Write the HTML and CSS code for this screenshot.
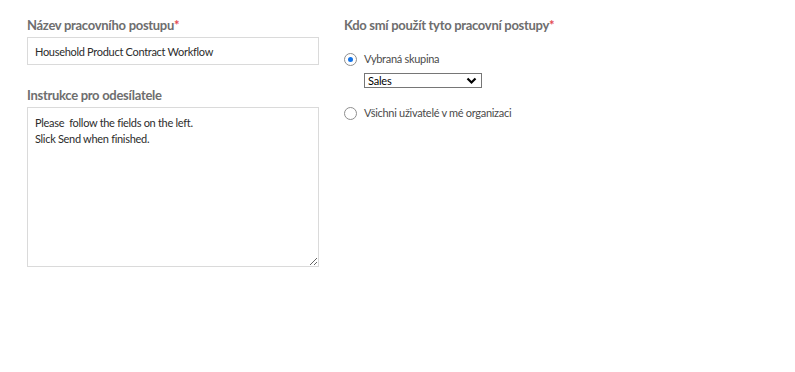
FILE: index.html
```html
<!DOCTYPE html>
<html lang="cs">
  <head>
    <meta charset="utf-8" />
    <title>Pracovní postup</title>
    <link rel="stylesheet" href="styles.css">
  </head>
  <body>
    <div class="form">
      <div class="col left">
        <div class="field">
          <label class="label">Název pracovního postupu<span class="req">*</span></label>
          <input class="text-input" type="text" value="Household Product Contract Workflow" />
        </div>
        <div class="field">
          <label class="label">Instrukce pro odesílatele</label>
          <textarea class="text-area">Please  follow the fields on the left.
Slick Send when finished.</textarea>
        </div>
      </div>
      <div class="col right">
        <div class="label">Kdo smí použít tyto pracovní postupy<span class="req">*</span></div>
        <div class="options">
          <div class="option">
            <label class="radio-row"><span class="radio checked"></span>Vybraná skupina</label>
            <div class="select">
              <span>Sales</span>
              <svg width="11" height="8" viewBox="0 0 11 8"><path d="M1.5 1.5 L5.5 5.5 L9.5 1.5" fill="none" stroke="#000" stroke-width="2.2"/></svg>
            </div>
          </div>
          <label class="radio-row"><span class="radio"></span>Všichni uživatelé v mé organizaci</label>
        </div>
      </div>
    </div>
  </body>
</html>
```

FILE: styles.css
```css
html,
body {
  width: 100%;
  height: 100%;
}

body {
  margin: 0;
  background: #fff;
  font-family: Lato, "Noto Sans", sans-serif;
  color: #2c2c2c;
}

.form {
  display: flex;
  gap: 25px;
  padding: 17px 27px;
}

.col {
  display: flex;
  flex-direction: column;
}

.left {
  width: 292px;
  gap: 22px;
}

.field {
  display: flex;
  flex-direction: column;
  gap: 4px;
}

.label {
  font-size: 13px;
  font-weight: bold;
  letter-spacing: -0.3px;
  color: #6e6e6e;
  line-height: 16px;
}

.req {
  color: #e34850;
}

.text-input {
  box-sizing: border-box;
  width: 292px;
  height: 28px;
  margin: 0;
  padding: 0 7px;
  border: 1px solid #dadada;
  border-radius: 0;
  font-family: inherit;
  font-size: 11px;
  letter-spacing: -0.3px;
  color: #2c2c2c;
  outline: none;
}

.text-area {
  box-sizing: border-box;
  width: 292px;
  height: 160px;
  margin: 0;
  padding: 7px 7px;
  border: 1px solid #dadada;
  border-radius: 0;
  font-family: inherit;
  font-size: 11px;
  letter-spacing: -0.3px;
  line-height: 16px;
  color: #2c2c2c;
  resize: vertical;
  outline: none;
}

.options {
  display: flex;
  flex-direction: column;
  gap: 18px;
  margin-top: 19px;
}

.option {
  display: flex;
  flex-direction: column;
  gap: 7px;
}

.radio-row {
  display: flex;
  align-items: center;
  gap: 7px;
  font-size: 11px;
  letter-spacing: -0.3px;
  color: #4b4b4b;
  line-height: 14px;
}

.radio {
  box-sizing: border-box;
  width: 13px;
  height: 13px;
  border: 1px solid #8e8e8e;
  border-radius: 50%;
  background: #fff;
  position: relative;
}

.radio.checked::after {
  content: "";
  position: absolute;
  left: 3px;
  top: 3px;
  width: 5px;
  height: 5px;
  border-radius: 50%;
  background: #1473e6;
}

.select {
  box-sizing: border-box;
  display: flex;
  align-items: center;
  justify-content: space-between;
  width: 118px;
  height: 15px;
  margin-left: 20px;
  padding: 0 4px 0 3px;
  border: 1px solid #767676;
  font-size: 11px;
  letter-spacing: -0.2px;
  color: #000;
}
```
